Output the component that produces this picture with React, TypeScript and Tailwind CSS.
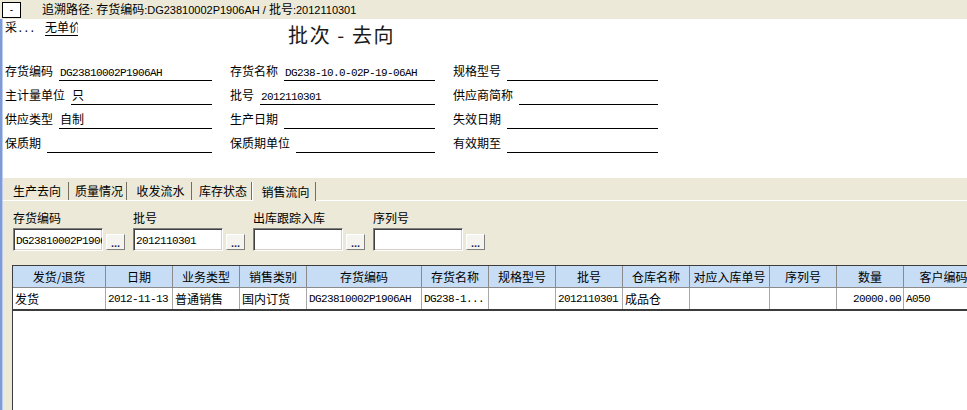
import React from "react";

const cjk = "font-['Noto_Sans_CJK_SC',sans-serif]";
const mono = "font-['Liberation_Mono','Noto_Sans_CJK_SC',monospace] text-[11px] tracking-[-0.6px]";

type Field = { label: string; value?: string; mono?: boolean };

const rows: Field[][] = [
  [
    { label: "存货编码", value: "DG23810002P1906AH", mono: true },
    { label: "存货名称", value: "DG238-10.0-02P-19-06AH", mono: true },
    { label: "规格型号" },
  ],
  [
    { label: "主计量单位", value: "只" },
    { label: "批号", value: "2012110301", mono: true },
    { label: "供应商简称" },
  ],
  [
    { label: "供应类型", value: "自制" },
    { label: "生产日期" },
    { label: "失效日期" },
  ],
  [{ label: "保质期" }, { label: "保质期单位" }, { label: "有效期至" }],
];

const colW = ["w-[207px]", "w-[205px]", "w-[205px]"];

const tabs = [
  { t: "生产去向", w: "w-[66px]" },
  { t: "质量情况", w: "w-[58px]" },
  { t: "收发流水", w: "w-[65px]" },
  { t: "库存状态", w: "w-[60px]" },
  { t: "销售流向", w: "w-[64px]", active: true },
];

const filters = [
  { label: "存货编码", value: "DG23810002P1906AH" },
  { label: "批号", value: "2012110301" },
  { label: "出库跟踪入库", value: "" },
  { label: "序列号", value: "" },
];

type Col = { h: string; w: string; v: string; mono?: boolean; right?: boolean };
const cols: Col[] = [
  { h: "发货/退货", w: "w-[93px]", v: "发货" },
  { h: "日期", w: "w-[67px]", v: "2012-11-13", mono: true },
  { h: "业务类型", w: "w-[67px]", v: "普通销售" },
  { h: "销售类别", w: "w-[67px]", v: "国内订货" },
  { h: "存货编码", w: "w-[115px]", v: "DG23810002P1906AH", mono: true },
  { h: "存货名称", w: "w-[67px]", v: "DG238-1...", mono: true },
  { h: "规格型号", w: "w-[67px]", v: "" },
  { h: "批号", w: "w-[67px]", v: "2012110301", mono: true },
  { h: "仓库名称", w: "w-[67px]", v: "成品仓" },
  { h: "对应入库单号", w: "w-[80px]", v: "" },
  { h: "序列号", w: "w-[67px]", v: "" },
  { h: "数量", w: "w-[67px]", v: "20000.00", mono: true, right: true },
  { h: "客户编码", w: "w-[80px]", v: "A050", mono: true },
];

export default function App() {
  return (
    <div className={`w-[967px] h-[410px] overflow-hidden bg-white flex flex-col text-[12px] text-black ${cjk}`}>
      {/* top bar */}
      <div className="h-[19px] shrink-0 bg-[#ECE9D8] flex items-center">
        <div className="ml-[2px] w-[19px] h-[16px] border border-black bg-white flex items-center justify-center text-[10px] leading-none font-['Liberation_Sans',sans-serif]">
          -
        </div>
        <div className="ml-[21px] leading-[14px] whitespace-nowrap font-['Liberation_Sans','Noto_Sans_CJK_SC',sans-serif] text-[12px]">
          追溯路径<span className="text-[11px]">: </span>存货编码<span className="text-[11px]">:DG23810002P1906AH / </span>批号<span className="text-[11px]">:2012110301</span>
        </div>
      </div>

      <div className="flex-1 flex min-h-0">
        {/* left strip */}
        <div className="w-[3px] shrink-0 border-l-2 border-[#7f9bd5] bg-[#bccdef]" />

        <div className="flex-1 flex flex-col min-w-0">
          {/* header area */}
          <div className="h-[38px] shrink-0 flex items-start">
            <div className="ml-[2px] mt-[1px] leading-[14px] whitespace-nowrap">
              采<span className={mono}>...</span>
            </div>
            <div className="ml-[10px] mt-[1px] w-[33px] h-[16px] overflow-hidden border-b border-black leading-[14px] whitespace-nowrap">
              无单价
            </div>
            <div className="ml-[210px] mt-[5px] text-[20px] leading-[22px] text-[#1a1a1a] whitespace-nowrap tracking-[1.6px]">
              批次 - 去向
            </div>
          </div>

          {/* form */}
          <div className="shrink-0 flex flex-col pl-[2px]">
            {rows.map((r, i) => (
              <div key={i} className="h-[24px] flex items-end gap-[18px]">
                {r.map((f, j) => (
                  <div key={j} className={`${colW[j]} h-[19px] flex`}>
                    <div className="pt-[2px] leading-[14px] whitespace-nowrap">{f.label}</div>
                    <div className="ml-[6px] flex-1 border-b border-black pt-[2px] leading-[14px] whitespace-nowrap overflow-hidden">
                      {f.value ? (
                        <span className={f.mono ? `${mono} ml-[1px]` : "ml-[1px]"}>{f.value}</span>
                      ) : null}
                    </div>
                  </div>
                ))}
              </div>
            ))}
          </div>

          <div className="h-[25px] shrink-0" />

          {/* beige lower area */}
          <div className="flex-1 flex flex-col bg-[#ECE9D8] min-h-0">
            {/* tabs */}
            <div className="h-[23px] shrink-0 border-b border-white pt-[4px] flex items-end">
              {tabs.map((t, i) => (
                <div
                  key={i}
                  className={`${t.w} flex items-center justify-center pl-[3px] leading-[14px] whitespace-nowrap border-r border-[#716f64] ${
                    t.active ? "h-[19px] -mb-px bg-[#ECE9D8] border-l border-l-white" : "h-[18px]"
                  }`}
                >
                  {t.t}
                </div>
              ))}
            </div>

            {/* filters */}
            <div className="h-[64px] shrink-0 pl-[10px] pt-[10px] flex">
              {filters.map((f, i) => (
                <div key={i} className="w-[120px] flex flex-col">
                  <div className="leading-[14px] whitespace-nowrap">{f.label}</div>
                  <div className="mt-[3px] flex items-end">
                    <div className="w-[90px] h-[23px] bg-white border border-t-[#808080] border-l-[#808080] border-b-white border-r-white shadow-[inset_1px_1px_0_#404040,inset_-1px_-1px_0_#d4d0c8] pl-[2px] pt-[3px] overflow-hidden whitespace-nowrap leading-[14px]">
                      <span className={mono}>{f.value}</span>
                    </div>
                    <div className="ml-[3px] mb-[1px] w-[19px] h-[16px] overflow-hidden bg-[#F5F4EF] border border-t-white border-l-white border-b-[#808080] border-r-[#808080] flex items-end justify-center pb-[3px] text-[11px] leading-[6px] font-bold text-[#1a2a6a] font-['Liberation_Sans',sans-serif]">
                      ...
                    </div>
                  </div>
                </div>
              ))}
            </div>

            {/* grid */}
            <div className="flex-1 pl-[9px] min-h-0">
              <div className="h-full bg-white border-l border-t border-[#3c3c3c] flex flex-col overflow-hidden">
                <div className="h-[22px] shrink-0 flex bg-[#C6DDF5] border-b border-[#8a8a8a]">
                  {cols.map((c, i) => (
                    <div
                      key={i}
                      className={`${c.w} shrink-0 border-r border-[#8a8a8a] flex items-center justify-center leading-[14px] whitespace-nowrap`}
                    >
                      {c.h}
                    </div>
                  ))}
                </div>
                <div className="h-[23px] shrink-0 flex border-b-2 border-[#3c3c3c]">
                  {cols.map((c, i) => (
                    <div
                      key={i}
                      className={`${c.w} shrink-0 border-r border-[#a8a8a8] flex items-center leading-[14px] whitespace-nowrap overflow-hidden ${
                        c.right ? "justify-end pr-[2px]" : "pl-[2px]"
                      }`}
                    >
                      <span className={c.mono ? mono : ""}>{c.v}</span>
                    </div>
                  ))}
                </div>
                <div className="flex-1" />
              </div>
            </div>
          </div>
        </div>
      </div>
    </div>
  );
}
